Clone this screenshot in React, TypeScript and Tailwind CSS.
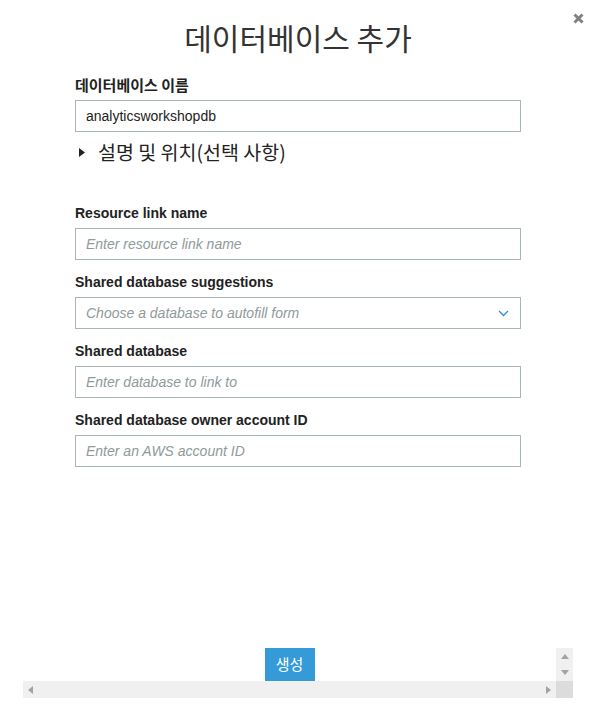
const ko = "font-['Malgun_Gothic','Noto_Sans_CJK_KR',sans-serif]";
const en = "font-['Liberation_Sans','Noto_Sans_CJK_KR',sans-serif]";

function Field({ label, placeholder, select }: { label: string; placeholder: string; select?: boolean }) {
  return (
    <div className="mt-[12px] first:mt-0">
      <div className={`${en} text-[14px] leading-[20px] font-bold text-[#222]`}>{label}</div>
      <div className="mt-[5px] flex h-[32px] items-center border border-[#aab7b8] bg-white pl-[10px] pr-[12px]">
        <span className={`${en} flex-1 text-[14px] italic text-[#8f9a9b]`}>{placeholder}</span>
        {select && (
          <svg width="11" height="7" viewBox="0 0 11 7" className="mr-[-1px]">
            <path d="M1 1l4.5 4.5L10 1" fill="none" stroke="#2f8fd8" strokeWidth="1.3" />
          </svg>
        )}
      </div>
    </div>
  );
}

export default function App() {
  return (
    <div className="relative flex h-[709px] w-[596px] flex-col bg-white text-[#222]">
      <button className="absolute right-[12px] top-[13px]" aria-label="close">
        <svg width="11" height="11" viewBox="0 0 11 11">
          <path d="M1.5 1.5l8 8M9.5 1.5l-8 8" stroke="#808080" strokeWidth="3" />
        </svg>
      </button>

      <h1 className={`${ko} mt-[18px] text-center text-[30px] leading-[38px] text-[#333]`}>데이터베이스 추가</h1>

      <div className="mx-[75px] mt-[19px] w-[446px]">
        <div className={`${ko} text-[15px] leading-[20px] font-bold text-[#222]`}>데이터베이스 이름</div>
        <div className="mt-[5px] flex h-[32px] items-center border border-[#aab7b8] pl-[10px]">
          <span className={`${en} text-[14px] text-[#222]`}>analyticsworkshopdb</span>
        </div>
        <div className={`${ko} mt-[8px] flex items-center text-[19.5px] leading-[24px] text-[#222]`}>
          <svg width="6" height="9" viewBox="0 0 6 9" className="ml-[4px] mr-[13px]">
            <path d="M0 0l6 4.5L0 9z" fill="#222" />
          </svg>
          설명 및 위치(선택 사항)
        </div>

        <div className="mt-[39px]">
          <Field label="Resource link name" placeholder="Enter resource link name" />
          <Field label="Shared database suggestions" placeholder="Choose a database to autofill form" select />
          <Field label="Shared database" placeholder="Enter database to link to" />
          <Field label="Shared database owner account ID" placeholder="Enter an AWS account ID" />
        </div>
      </div>

      <div className="flex-1" />

      <div className="mx-[23px] mb-[11px] flex w-[550px] flex-col">
        <div className="flex h-[33px]">
          <div className="flex flex-1 justify-center">
            <button className={`${ko} h-[33px] w-[50px] bg-[#349bd8] text-[15px] text-white`}>생성</button>
          </div>
          <div className="flex w-[17px] flex-col items-center justify-between bg-[#f0f0f0] py-[6px]">
            <svg width="8" height="5" viewBox="0 0 8 5"><path d="M0 5L4 0l4 5z" fill="#a3a3a3" /></svg>
            <svg width="8" height="5" viewBox="0 0 8 5"><path d="M0 0h8L4 5z" fill="#a3a3a3" /></svg>
          </div>
        </div>
        <div className="flex h-[17px]">
          <div className="flex flex-1 items-center justify-between bg-[#f0f0f0] px-[5px]">
            <svg width="5" height="8" viewBox="0 0 5 8"><path d="M5 0v8L0 4z" fill="#a3a3a3" /></svg>
            <svg width="5" height="8" viewBox="0 0 5 8"><path d="M0 0v8l5-4z" fill="#a3a3a3" /></svg>
          </div>
          <div className="w-[17px] bg-[#dcdcdc]" />
        </div>
      </div>
    </div>
  );
}
